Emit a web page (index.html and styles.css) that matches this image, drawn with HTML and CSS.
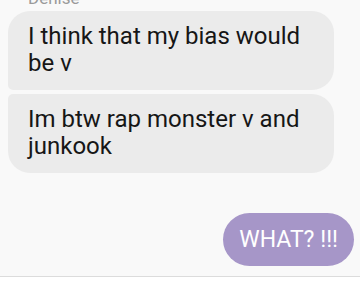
FILE: index.html
```html
<!DOCTYPE html>
<html lang="en">
<head>
    <meta charset="UTF-8">
    <meta name="viewport" content="width=device-width, initial-scale=1.0">
    <title>Chat</title>
    <link rel="stylesheet" href="styles.css">
</head>
<body>
    <div class="thread">
        <div class="sender">Denise</div>
        <div class="bubble incoming first">I think that my bias would be v</div>
        <div class="bubble incoming last">Im btw rap monster v and junkook</div>
        <div class="outgoing-row">
            <div class="bubble outgoing">WHAT? !!!</div>
        </div>
    </div>
    <div class="composer"></div>
</body>
</html>
```

FILE: styles.css
```css
body {
    font-family: Roboto, 'Noto Sans', sans-serif;
    margin: 0;
    background-color: #f9f9f9;
    height: 284px;
    overflow: hidden;
    display: flex;
    flex-direction: column;
}
.thread {
    height: 276px;
    padding: 0 6px 0 8px;
    box-sizing: border-box;
}
.sender {
    font-size: 17px;
    line-height: 18px;
    color: #9a9a9a;
    margin: -11px 0 4px 20px;
}
.bubble {
    font-size: 24px;
    line-height: 27px;
    color: #161616;
    box-sizing: border-box;
}
.incoming {
    width: 326px;
    background-color: #ebebeb;
    padding: 12px 20px 13px 20px;
    margin-bottom: 4px;
}
.first {
    border-radius: 22px 22px 22px 5px;
}
.last {
    border-radius: 5px 22px 22px 22px;
}
.outgoing-row {
    display: flex;
    justify-content: flex-end;
    margin-top: 40px;
}
.outgoing {
    font-size: 23px;
    background-color: #a696c8;
    color: #fff;
    padding: 13px 16px;
    border-radius: 27px;
}
.composer {
    flex: 1;
    background-color: #fff;
    border-top: 1px solid #dcdcdc;
}
```
